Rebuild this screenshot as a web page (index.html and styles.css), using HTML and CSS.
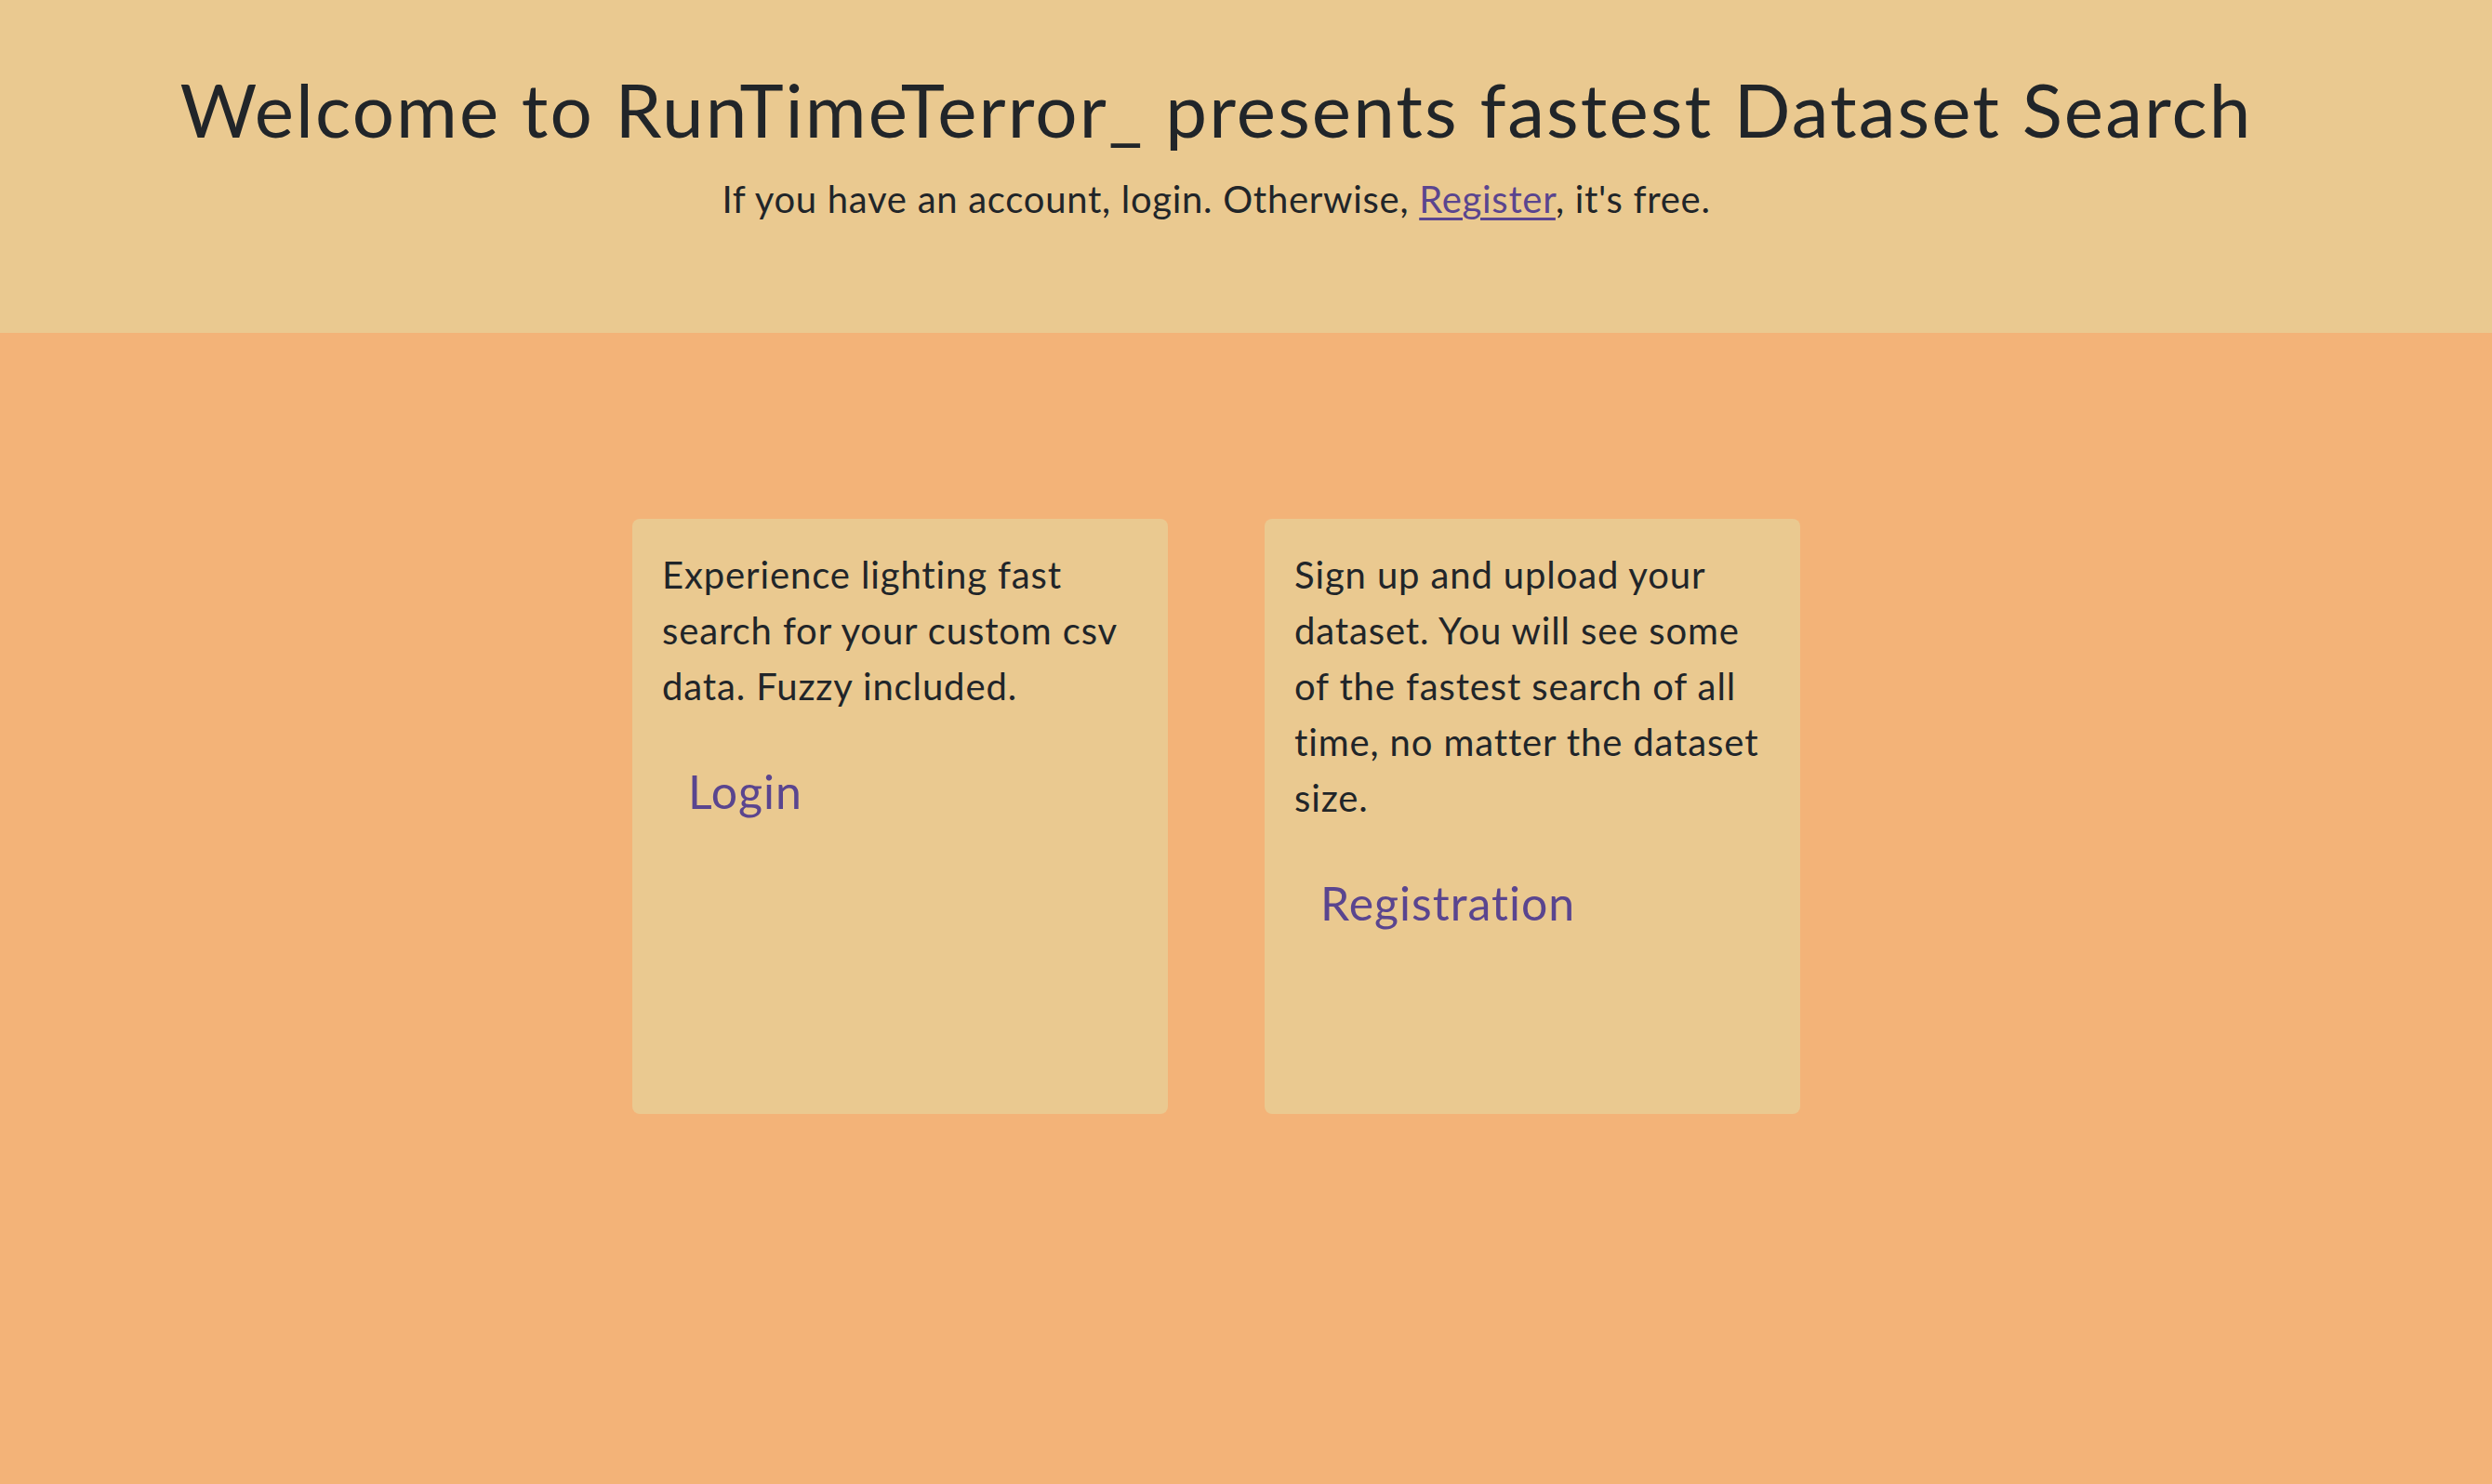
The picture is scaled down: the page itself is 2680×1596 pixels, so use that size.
FILE: index.html
```html
<!DOCTYPE html>
<html lang="en">
<head>
<meta charset="utf-8">
<title>RunTimeTerror_ Dataset Search</title>
<link rel="stylesheet" href="styles.css">
</head>
<body>
<header class="hero">
  <h1 class="hero-title">Welcome to RunTimeTerror_ presents fastest Dataset Search</h1>
  <p class="hero-lead">If you have an account, login. Otherwise, <a class="link" href="#">Register</a>, it's free.</p>
</header>
<main class="cards">
  <section class="card">
    <p class="card-text">Experience lighting fast search for your custom csv data. Fuzzy included.</p>
    <a class="card-btn" href="#">Login</a>
  </section>
  <section class="card">
    <p class="card-text">Sign up and upload your dataset. You will see some of the fastest search of all time, no matter the dataset size.</p>
    <a class="card-btn" href="#">Registration</a>
  </section>
</main>
</body>
</html>
```
FILE: styles.css
```css
html, body {
  margin: 0;
  padding: 0;
}
body {
  background: #f3b378;
  font-family: "Lato", "Noto Sans", sans-serif;
  color: #212529;
  min-height: 1596px;
}
.hero {
  background: #eac990;
  height: 358px;
  box-sizing: border-box;
  padding: 69px 64px 0 0;
  text-align: center;
}
.hero-title {
  margin: 0;
  font-size: 80px;
  line-height: 1.2;
  font-weight: 400;
  letter-spacing: 0.026em;
}
.hero-lead {
  margin: 19px 0 0;
  font-size: 40px;
  line-height: 1.5;
  letter-spacing: 0.018em;
}
.link {
  color: #5a458f;
  text-decoration: underline;
  text-underline-offset: 5px;
  text-decoration-thickness: 3px;
}
.cards {
  display: flex;
  justify-content: center;
  gap: 104px;
  padding: 200px 64px 0 0;
}
.card {
  width: 576px;
  height: 640px;
  box-sizing: border-box;
  background: #eac990;
  border-radius: 8px;
  padding: 30px 32px;
  display: flex;
  flex-direction: column;
  align-items: flex-start;
}
.card-text {
  margin: 0;
  font-size: 40px;
  line-height: 1.5;
  letter-spacing: 0.022em;
}
.card-btn {
  margin-top: 46px;
  padding: 0 28px;
  font-size: 50px;
  line-height: 1.5;
  letter-spacing: 0.02em;
  color: #5a458f;
  text-decoration: none;
}
```
